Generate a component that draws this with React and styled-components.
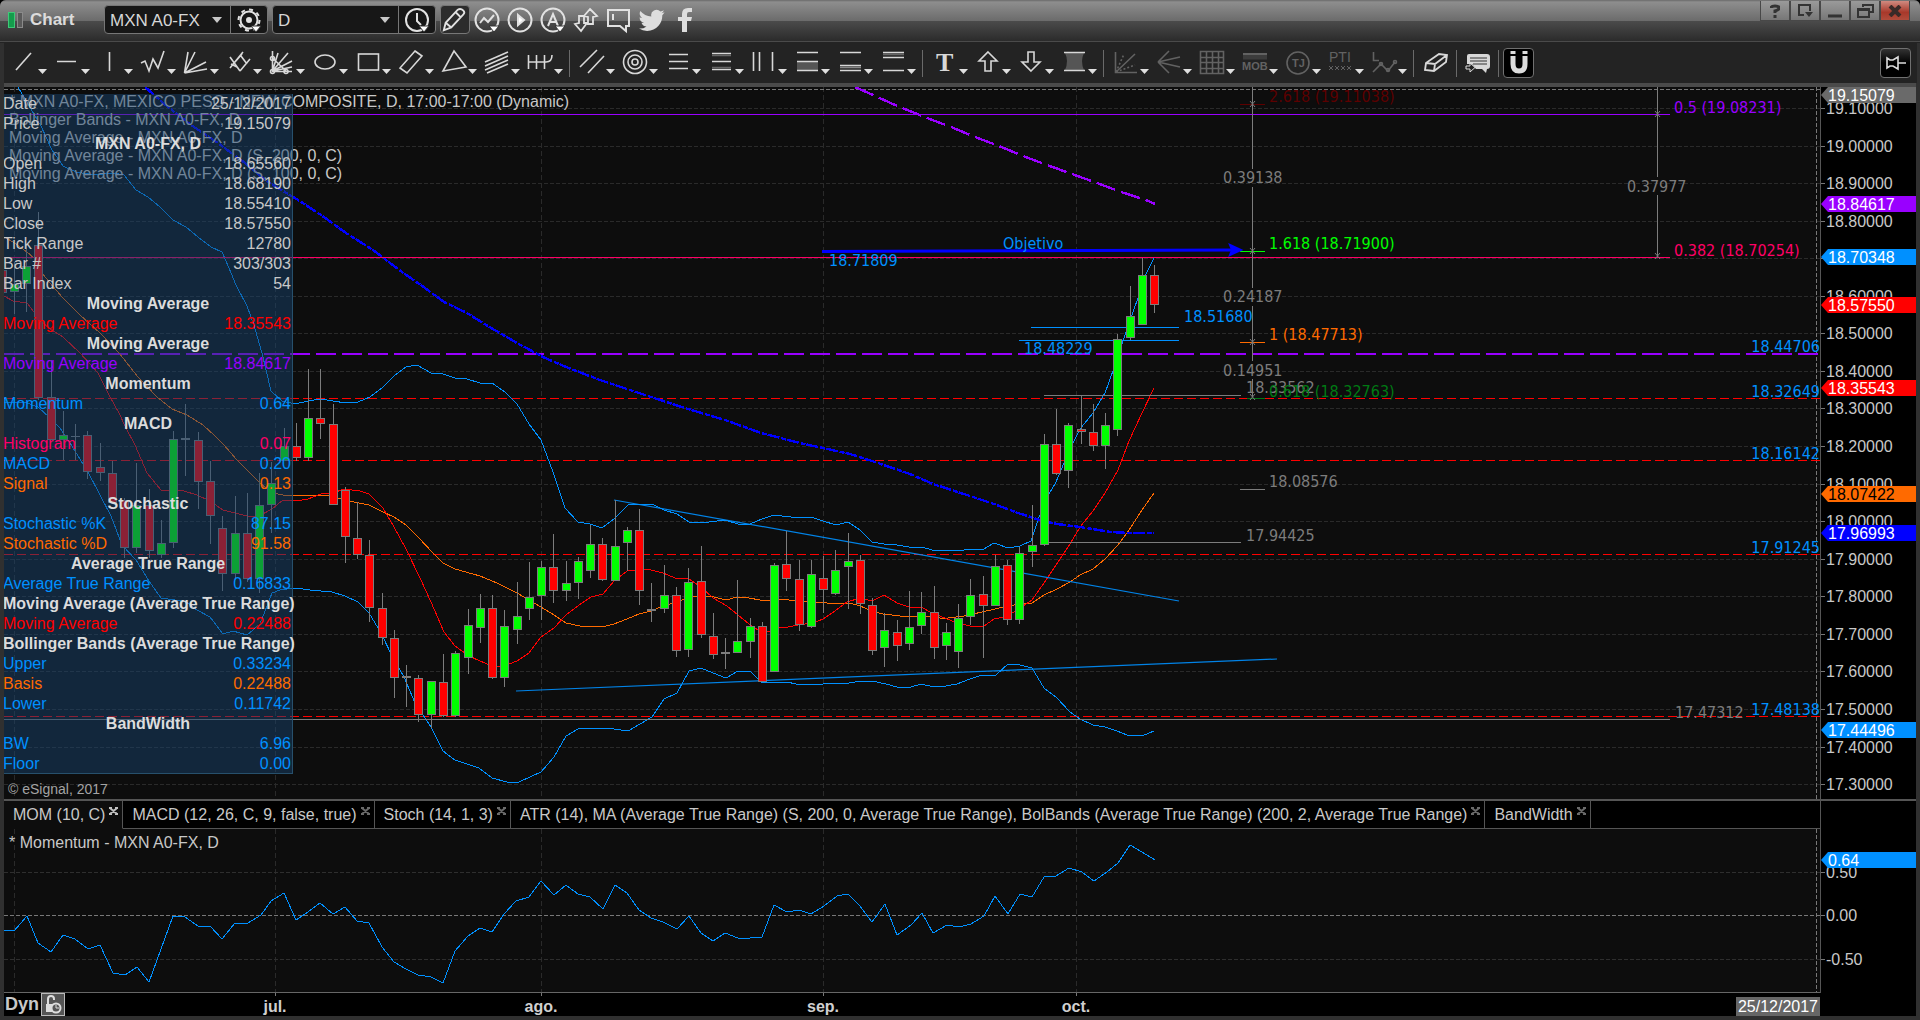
import React from 'react'
import styled, {createGlobalStyle} from 'styled-components'

const GlobalStyle = createGlobalStyle`
  * {
    box-sizing: border-box;
  }
  body {
    margin: 0;
    background: #000;
    font-family: 'Liberation Sans', Arial, sans-serif;
    font-size: 16px;
    color: #c8c8c8;
  }
  button,
  select {
    font: inherit;
    color: inherit;
    padding: 0;
    border: none;
    background: none;
  }
`

/* ---------- window frame ---------- */

const Window = styled.main`
  display: flex;
  flex-direction: column;
  min-height: 100vh;
  background: #303030;
  border-radius: 6px 6px 0 0;
  overflow: hidden;
`

const TitleBar = styled.header`
  display: flex;
  align-items: flex-start;
  height: 43px;
  padding: 0 10px 0 8px;
  background: linear-gradient(#6a6a6a 0, #8e8e8e 2px, #6b6b6b 21px, #4b4b4b 21px, #2b2b2b 41px, #4a4a4a 41px, #4a4a4a 42px, #232323 42px);
`

const TitleGroup = styled.div`
  display: flex;
  align-items: center;
  height: 34px;
  padding-top: 5px;
`

const Title = styled.h1`
  width: 74px;
  margin: 0 0 0 6px;
  font-size: 17px;
  line-height: 24px;
  color: #dcdcdc;
`

const ComboBox = styled.div`
  display: flex;
  align-items: center;
  height: 29px;
  margin-right: 4px;
  background: #171717;
  border: 1px solid #777;
  border-radius: 4px;
`

const SelectWrap = styled.label`
  display: flex;
  align-items: center;
  width: ${props => props.$width};
  height: 100%;
  border-right: 1px solid #777;

  svg {
    margin-left: -18px;
    pointer-events: none;
  }
`

const Select = styled.select`
  width: 100%;
  height: 100%;
  padding: 1px 0 0 5px;
  font-size: 17px;
  color: #d6d6d6;
  appearance: none;
`

const TitleButton = styled.button`
  display: flex;
  align-items: center;
  justify-content: center;
  width: ${props => props.$width || '33px'};
  height: 29px;
  border-radius: 4px;
  ${props => props.$framed && 'background: #2c2c2c; border: 1px solid #777;'}
`

const WindowButtons = styled.div`
  display: flex;
  margin-left: auto;
  padding-top: 1px;
`

const WindowButton = styled.button`
  display: flex;
  align-items: center;
  justify-content: center;
  width: 30px;
  height: 20px;
  background: ${props => (props.$close ? 'linear-gradient(#d08a80, #a8382a 60%, #b04c3c)' : 'linear-gradient(#9a9a9a, #777)')};
  border: 1px solid #484848;
  border-top: none;
`

const ToolBar = styled.div`
  display: flex;
  align-items: center;
  height: 40px;
  margin: 0 3px 0 4px;
  padding: 0 6px 0 2px;
  background: #232323;
`

const Tool = styled.button`
  width: 43px;
  height: 40px;
  color: ${props => (props.$dim ? '#626262' : '#d8d8d8')};

  svg {
    display: block;
  }
`

const SmallTool = styled(Tool)`
  width: ${props => props.$width};
`

const Separator = styled.span`
  width: 1px;
  height: 27px;
  margin: 0 4px;
  background: #6a6a6a;
`

const SquareButton = styled.button`
  display: flex;
  align-items: center;
  justify-content: center;
  width: 31px;
  height: 30px;
  background: ${props => (props.$active ? '#000' : 'linear-gradient(#333, #000 50%)')};
  border: 1px solid #707070;
  border-radius: 4px;
`

const Spacer = styled.span`
  flex: 1;
`

/* ---------- chart area ---------- */

const Body = styled.section`
  flex: 1;
  display: grid;
  grid-template-columns: minmax(0, 1fr) 96px;
  grid-template-rows: minmax(712px, 1fr) 30px 164px 23px;
  margin: 0 4px 4px;
  border-top: 4px solid #4a4a4a;
  background: #000;
`

const Plot = styled.div`
  position: relative;
  background: #0d0d0d;
  overflow: hidden;
  border-bottom: ${props => props.$line || 'none'};
`

const Axis = styled.div`
  border-left: 1px solid #555;
  overflow: hidden;
`

const Drawing = styled.svg`
  display: block;
  width: 100%;
  height: 100%;
  position: ${props => (props.$layer ? 'absolute' : 'static')};
  inset: 0;
`

const Legend = styled.ul`
  position: absolute;
  left: 5px;
  top: ${props => props.$top};
  margin: 0;
  padding: 0;
  list-style: none;
  line-height: 18px;
  white-space: pre;
`

const Copyright = styled.small`
  position: absolute;
  left: 4px;
  bottom: 1px;
  font-size: 14px;
  line-height: 18px;
  color: #a4a4a4;
`

const DataWindow = styled.table`
  position: absolute;
  top: 7px;
  left: -1px;
  width: 290px;
  table-layout: fixed;
  border-collapse: collapse;
  background: rgba(23, 65, 108, 0.5);
  box-shadow: inset -1px -1px #27506c;
  line-height: 20px;
  white-space: nowrap;

  th,
  td {
    height: 20px;
    padding: 0;
  }
  td {
    padding-right: 2px;
    text-align: right;
  }
`

const DataLabel = styled.th`
  font-weight: normal;
  text-align: left;
  color: ${props => props.$color};
`

const DataValue = styled.td`
  color: ${props => props.$color};
`

const DataHeading = styled.th`
  color: #dcdcdc;
  text-align: center;
`

const TabBar = styled.nav`
  display: flex;
  background: #000;
  border-top: 2px solid #555;
`

const Tab = styled.div`
  display: flex;
  align-items: flex-start;
  gap: 4px;
  padding: 0 4px 0 9px;
  background: ${props => (props.$active ? '#0d0d0d' : '#000')};
  border-right: 1px solid #555;
  border-bottom: 1px solid ${props => (props.$active ? '#0d0d0d' : '#555')};
  white-space: nowrap;
`

const TabName = styled.button`
  line-height: 28px;
`

const TabClose = styled.button`
  width: 9px;
  height: 14px;
  color: ${props => (props.$active ? '#c0c0c0' : '#6a6a6a')};
`

const TabFill = styled.span`
  flex: 1;
  border-bottom: 1px solid #555;
`

const AxisGap = styled.div`
  border-left: 1px solid #555;
  border-top: 2px solid #555;
`

const TimeAxis = styled.footer`
  position: relative;
  display: flex;
  align-items: center;
  background: #000;
`

const Mode = styled.strong`
  margin: 0 2px 0 1px;
  font-size: 18px;
`

const LockButton = styled.button`
  width: 24px;
  height: 23px;
  background: #555;
  border: 1px solid #bbb;
`

const CursorDate = styled.time`
  margin: 4px 0 0 auto;
  padding: 0 2px;
  line-height: 19px;
  color: #fff;
  background: #666;
`

/* ---------- data ---------- */

const WHITE = '#c8c8c8'
const BLUE = '#0090ff'
const RED = '#ff0000'
const ORANGE = '#ff6a00'
const PURPLE = '#9900ff'
const PINK = '#ff0066'
const GRAY = '#7c7c7c'

const dataRows = [
  ['Date', '25/12/2017', WHITE],
  ['Price', '19.15079', WHITE],
  ['MXN A0-FX, D'],
  ['Open', '18.65560', WHITE],
  ['High', '18.68190', WHITE],
  ['Low', '18.55410', WHITE],
  ['Close', '18.57550', WHITE],
  ['Tick Range', '12780', WHITE],
  ['Bar #', '303/303', WHITE],
  ['Bar Index', '54', WHITE],
  ['Moving Average'],
  ['Moving Average', '18.35543', RED],
  ['Moving Average'],
  ['Moving Average', '18.84617', PURPLE],
  ['Momentum'],
  ['Momentum', '0.64', BLUE],
  ['MACD'],
  ['Histogram', '0.07', PINK],
  ['MACD', '0.20', BLUE],
  ['Signal', '0.13', ORANGE],
  ['Stochastic'],
  ['Stochastic %K', '87.15', BLUE],
  ['Stochastic %D', '91.58', ORANGE],
  ['Average True Range'],
  ['Average True Range', '0.16833', BLUE],
  ['Moving Average (Average True Range)'],
  ['Moving Average', '0.22488', RED],
  ['Bollinger Bands (Average True Range)'],
  ['Upper', '0.33234', BLUE],
  ['Basis', '0.22488', ORANGE],
  ['Lower', '0.11742', BLUE],
  ['BandWidth'],
  ['BW', '6.96', BLUE],
  ['Floor', '0.00', BLUE]
]

const studies = [
  '* MXN A0-FX, MEXICO PESO - NEW COMPOSITE, D, 17:00-17:00 (Dynamic)',
  'Bollinger Bands - MXN A0-FX, D',
  'Moving Average - MXN A0-FX, D',
  'Moving Average - MXN A0-FX, D (S, 200, 0, C)',
  'Moving Average - MXN A0-FX, D (S, 100, 0, C)'
]

const tabs = [
  'MOM (10, C)',
  'MACD (12, 26, C, 9, false, true)',
  'Stoch (14, 1, 3)',
  'ATR (14), MA (Average True Range) (S, 200, 0, Average True Range), BolBands (Average True Range) (200, 2, Average True Range)',
  'BandWidth'
]

// wick top, body top, body bottom, wick bottom, u(p) / d(own) / n(one)
const candles = [
  [270, 270, 293, 293, 'd'], [262, 284, 292, 314, 'u'], [245, 266, 284, 312, 'u'],
  [212, 245, 398, 400, 'd'], [360, 397, 440, 440, 'd'], [411, 435, 440, 460, 'u'],
  [424, 436, 437, 460, 'n'], [431, 435, 472, 479, 'd'], [443, 467, 473, 481, 'd'],
  [461, 473, 503, 503, 'd'], [498, 500, 548, 558, 'd'], [463, 505, 548, 553, 'u'],
  [489, 505, 551, 558, 'd'], [520, 543, 555, 558, 'u'], [431, 439, 543, 548, 'u'],
  [404, 438, 440, 476, 'n'], [432, 440, 482, 509, 'd'], [461, 481, 516, 544, 'd'],
  [516, 528, 574, 591, 'd'], [496, 533, 574, 580, 'u'], [493, 533, 579, 582, 'd'],
  [473, 505, 579, 593, 'u'], [462, 483, 505, 533, 'u'], [428, 446, 461, 461, 'u'],
  [423, 446, 458, 461, 'd'], [369, 418, 458, 461, 'u'], [369, 418, 424, 439, 'd'],
  [404, 424, 505, 505, 'd'], [487, 490, 537, 563, 'd'], [502, 538, 555, 559, 'd'],
  [540, 555, 608, 622, 'd'], [593, 608, 638, 645, 'd'], [630, 638, 678, 698, 'd'],
  [665, 676, 678, 707, 'n'], [675, 678, 715, 722, 'd'], [681, 681, 715, 728, 'u'],
  [654, 682, 716, 717, 'd'], [651, 653, 716, 717, 'u'], [609, 625, 658, 674, 'u'],
  [594, 608, 628, 643, 'u'], [595, 608, 678, 679, 'd'], [610, 626, 678, 687, 'u'],
  [582, 616, 630, 644, 'u'], [562, 597, 609, 620, 'u'], [561, 567, 596, 620, 'u'],
  [534, 567, 591, 603, 'd'], [561, 583, 591, 601, 'u'], [557, 561, 583, 599, 'u'],
  [525, 544, 571, 578, 'u'], [538, 544, 580, 581, 'd'], [500, 546, 581, 581, 'u'],
  [527, 530, 543, 571, 'u'], [509, 530, 591, 605, 'd'], [583, 609, 611, 622, 'n'],
  [565, 595, 609, 613, 'u'], [587, 595, 651, 657, 'd'], [568, 582, 650, 657, 'u'],
  [546, 581, 635, 638, 'd'], [613, 636, 655, 659, 'd'], [638, 652, 654, 669, 'n'],
  [580, 641, 653, 653, 'u'], [618, 626, 642, 658, 'u'], [622, 626, 682, 682, 'd'],
  [563, 565, 672, 672, 'u'], [531, 564, 579, 591, 'd'], [560, 579, 625, 631, 'd'],
  [560, 574, 627, 628, 'u'], [556, 578, 590, 613, 'd'], [550, 570, 594, 595, 'u'],
  [533, 561, 567, 609, 'u'], [555, 560, 604, 614, 'd'], [598, 605, 651, 655, 'd'],
  [613, 630, 648, 667, 'u'], [620, 632, 646, 661, 'd'], [591, 627, 644, 650, 'u'],
  [592, 612, 626, 634, 'u'], [586, 612, 648, 659, 'd'], [623, 632, 646, 660, 'u'],
  [604, 618, 652, 668, 'u'], [579, 595, 617, 625, 'u'], [576, 594, 606, 658, 'd'],
  [555, 566, 606, 606, 'u'], [560, 565, 620, 625, 'd'], [547, 553, 620, 624, 'u'],
  [505, 545, 552, 567, 'u'], [434, 444, 545, 546, 'u'], [409, 444, 474, 475, 'd'],
  [423, 425, 471, 488, 'u'], [396, 429, 432, 444, 'd'], [404, 432, 446, 451, 'd'],
  [413, 425, 446, 469, 'u'], [334, 339, 430, 436, 'u'], [286, 316, 338, 340, 'u'],
  [258, 275, 325, 325, 'u'], [265, 275, 305, 313, 'd']
]

const upperBand =
  '18,87 28,104 41,126 52,150 63,166 76,172 95,175 113,173 124,175 136,190 148,197 160,207 173,220 186,227 198,237 211,247 222,252 229,268 236,285 247,306 254,325 262,353 271,391 282,401 295,404 308,401 320,399 333,401 346,403 358,402 370,397 382,388 394,376 406,367 417,365 431,373 443,374 455,378 467,379 480,383 492,383 505,392 517,404 529,424 541,440 553,472 565,508 578,522 590,524 602,528 614,519 628,505 640,504 652,504 664,510 677,514 689,522 701,523 725,520 738,524 750,524 762,519 774,515 799,518 811,517 823,521 836,525 848,522 860,530 872,542 884,544 897,545 909,547 922,547 932,550 964,550 984,549 994,543 1008,548 1020,546 1031,541 1039,517 1049,494 1056,482 1064,463 1073,443 1080,429 1093,413 1105,393 1114,368 1122,344 1132,315 1139,295 1146,274 1154,258'
const lowerBand =
  '4,403 24,402 38,407 50,418 60,428 70,443 88,472 100,495 111,516 122,545 136,560 149,581 161,598 175,600 186,602 197,610 210,617 223,634 233,631 247,635 260,624 272,593 280,590 295,588 310,590 332,592 345,596 358,602 369,613 381,633 394,660 404,677 415,703 431,727 443,751 455,760 479,768 492,778 507,782 519,782 541,772 554,757 566,736 578,729 590,728 614,729 628,731 640,724 652,717 664,699 677,693 689,671 701,668 713,673 726,678 738,671 750,671 761,682 787,682 796,684 811,685 835,683 849,683 862,681 872,681 886,684 897,687 911,687 921,684 934,687 946,686 957,684 970,679 982,675 996,675 1008,664 1020,665 1032,668 1044,688 1057,698 1070,712 1080,719 1093,725 1105,727 1117,731 1127,735 1142,736 1154,731'
const redAverage =
  '4,296 13,301 27,303 34,312 40,320 50,329 63,337 80,353 98,373 109,395 119,413 126,428 135,445 147,473 161,490 184,491 197,495 210,501 223,510 247,516 259,516 272,509 283,500 297,501 308,499 321,494 333,493 344,489 360,491 369,494 383,508 394,527 406,549 421,580 431,602 444,632 455,646 469,656 480,661 492,666 501,667 517,661 529,653 541,637 554,628 566,615 579,605 591,597 603,594 614,581 627,571 643,569 651,570 663,573 675,578 689,579 701,587 713,598 727,606 738,615 749,624 761,632 770,631 778,627 788,627 798,625 813,623 823,619 835,611 847,602 860,598 872,601 884,595 897,603 909,607 921,607 932,613 945,618 957,623 970,626 984,626 994,619 1004,617 1014,612 1023,606 1032,600 1044,583 1056,565 1070,544 1080,527 1093,511 1105,493 1118,470 1129,441 1142,413 1154,388'
const orangeAverage =
  '4,237 13,242 27,252 34,258 42,273 50,283 63,298 80,315 100,333 119,353 138,377 157,397 172,409 187,415 203,425 214,435 224,445 237,460 249,472 260,483 272,493 283,495 295,496 320,495 331,496 344,500 369,505 383,512 394,517 406,525 419,538 432,552 443,563 455,569 480,576 497,583 517,593 529,600 541,607 554,615 566,623 580,626 602,627 614,624 627,619 639,614 651,611 663,606 677,602 689,597 710,596 726,600 737,597 749,598 760,600 773,600 783,599 795,601 813,602 827,603 850,603 860,606 872,611 883,614 909,617 921,616 940,618 948,618 964,616 982,612 995,609 1008,606 1020,604 1032,603 1044,595 1057,589 1070,582 1080,575 1093,569 1105,559 1118,545 1129,530 1142,510 1154,493'
const blueAverage =
  '145,87 168,107 191,125 218,143 245,163 268,182 295,198 321,215 346,233 373,250 402,272 425,288 444,302 467,313 486,325 517,343 543,357 566,367 600,380 615,385 651,397 688,409 725,420 761,433 800,443 850,454 872,461 910,474 933,484 970,496 994,504 1018,513 1043,521 1057,524 1080,527 1111,532 1129,533 1154,533'
const purpleAverage =
  '855,87 873,95 895,105 927,118 951,127 975,137 999,146 1023,156 1047,165 1072,174 1097,183 1121,192 1146,200 1155,204'
const momentum =
  '4,930 14,931 27,916 38,943 51,952 63,935 75,939 88,949 100,945 113,973 125,975 137,967 149,982 161,949 173,916 185,917 198,926 210,926 222,939 235,923 248,923 261,915 271,901 284,893 296,920 308,912 320,903 333,914 345,907 357,921 369,923 382,947 394,962 406,969 418,975 431,977 443,983 455,951 468,936 480,928 492,932 504,914 516,901 529,897 541,881 554,895 566,885 578,894 590,897 603,909 615,885 627,893 639,910 651,918 663,922 677,929 689,916 701,933 713,941 725,933 738,938 750,938 762,937 774,905 787,912 799,910 811,914 824,906 837,896 848,894 860,906 872,922 885,904 897,935 911,925 922,913 933,933 947,925 959,927 971,924 984,916 995,896 1008,914 1020,894 1032,897 1044,877 1056,876 1069,868 1082,872 1094,881 1107,872 1118,863 1130,845 1142,852 1155,860'

const months = [[14], [275, 'jul.'], [541, 'ago.'], [823, 'sep.'], [1076, 'oct.']]

const gridPrices = []
for (let i = 0; i < 19; i++) gridPrices.push(19.1 - i / 10)
const priceY = price => Math.round(108 + (19.1 - price) * 375.6)

const priceTags = [
  ['19.15079', 95, '#6a6a6a', '#fff'],
  ['18.84617', 204, PURPLE, '#fff'],
  ['18.70348', 257, BLUE, '#fff'],
  ['18.57550', 305, RED, '#fff'],
  ['18.35543', 388, RED, '#fff'],
  ['18.07422', 494, ORANGE, '#000'],
  ['17.96993', 533, '#0000ff', '#fff'],
  ['17.44496', 730, BLUE, '#fff']
]

const redLevels = [
  ['18.32649', 398, 397],
  ['18.16142', 460, 459],
  ['17.91245', 554, 553],
  ['17.48138', 716, 715]
]

// text, x, baseline, colour
const labels = [
  ['18.71809', 829, 266, BLUE],
  ['Objetivo', 1003, 249, BLUE],
  ['18.51680', 1184, 322, BLUE],
  ['18.48229', 1024, 354, BLUE],
  ['2.618 (19.11038)', 1269, 102, '#5c0000'],
  ['1.618 (18.71900)', 1269, 249, '#00ff00'],
  ['1 (18.47713)', 1269, 340, ORANGE],
  ['18.33562', 1246, 393, GRAY],
  ['0.618 (18.32763)', 1269, 397, '#007a14'],
  ['18.08576', 1269, 487, GRAY],
  ['17.94425', 1246, 541, GRAY],
  ['0.39138', 1223, 183, GRAY],
  ['0.24187', 1223, 302, GRAY],
  ['0.14951', 1223, 376, GRAY],
  ['0.37977', 1627, 192, GRAY],
  ['0.5 (19.08231)', 1674, 113, PURPLE],
  ['0.382 (18.70254)', 1674, 256, PINK],
  ['17.47312', 1675, 718, GRAY]
]

// x1, x2, y, colour
const segments = [
  [4, 1670, 114, PURPLE],
  [4, 1670, 257, PINK],
  [4, 1670, 719, GRAY],
  [1031, 1179, 327, BLUE],
  [1019, 1179, 340, BLUE],
  [1044, 1241, 395, GRAY],
  [1044, 1241, 542, GRAY],
  [1240, 1265, 489, GRAY],
  [1240, 1265, 104, '#5c0000'],
  [1240, 1265, 251, '#00ff00'],
  [1240, 1265, 342, ORANGE],
  [1247, 1265, 398, '#007a14']
]

const fibSpans = [
  [1252, 87, 169], [1252, 187, 288], [1252, 306, 361], [1252, 379, 397],
  [1657, 87, 177], [1657, 195, 257]
]

const fibMarks = [[1252, 104], [1252, 251], [1252, 342], [1252, 397], [1657, 114], [1657, 256]]

/* ---------- icons ---------- */

const tools = [
  {
    items: [
      ['Trend line', <path d="M10 27 25 10" />],
      ['Horizontal line', <path d="M8 18.5H27" />],
      ['Vertical line', <path d="M17.5 9V28" />],
      ['Elliott wave', <path d="M6 20 10 18 14 28 18 16 23 25 29 8" />],
      ['Fan', <path d="M6.500 30 10 9M6.500 30 17 9M6.500 30 28 19M6.500 30 29 26" />],
      ['Pitchfork', <path d="M9 25 22 9M9 14 19 28M19 28 29 16M14 19 21 11M20 13 26 21M10 21 16 24" />],
      ['Gann fan', <><path d="M8.500 8V28.500H28M8.500 28 14 10M8.500 28 24 10M8.500 28 28 18M8.500 28 28 24M8.500 15 22 28" /><circle cx="8.500" cy="15.500" r="2" /><circle cx="8.500" cy="28.500" r="2" /><circle cx="22" cy="28.500" r="2" /></>],
      ['Ellipse', <ellipse cx="18" cy="19" rx="10" ry="7" />],
      ['Rectangle', <rect x="8.500" y="11" width="20" height="16" />],
      ['Parallelogram', <path d="M22 8 29 13 14 30 7 25Z" />],
      ['Triangle', <path d="M18 8 30 24 7 28Z" />],
      ['Regression', <path d="M6 19 29 9M6 23 29 13M6 27 29 17M8 30 29 21" />],
      ['Time cycles', <path d="M6.500 12V26M14.500 12V26M22.500 12V26M6 19H24Q30 19 30 12" />]
    ]
  },
  {
    items: [
      ['Channel', <path d="M6 24 23 7M14 30 30 13" />],
      ['Circles', <><circle cx="18" cy="19" r="11.500" /><circle cx="18" cy="19" r="7" /><circle cx="18" cy="19" r="3" /></>],
      ['Retracement', <path d="M9 11.500H28M9 18.500H28M9 25.500H28" />],
      ['Extension', <><path d="M9 10.500H28M9 18.500H28M9 26.500H28" /><path d="M9 12.500H28M9 24.500H28" stroke="#666" /></>],
      ['Time zones', <path d="M7.500 9V28M13.500 9V28M26.500 9V28" />],
      ['Range', <><path d="M8 19H29V27H8Z" fill="#555" stroke="none" /><path d="M8 9.500H29M8 18.500H29M8 27.500H29" /></>],
      ['Lower range', <><path d="M8 24.500H29" stroke="#888" /><path d="M8 9.500H29M8 22.500H29M8 27.500H29" /></>],
      ['Upper range', <><path d="M8 11.500H29" stroke="#666" /><path d="M8 9.500H29M8 14.500H29M8 27.500H29" /></>]
    ]
  },
  {
    items: [
      ['Text', <text x="9" y="28" fontFamily="Liberation Serif, serif" fontWeight="bold" fontSize="26" fill="currentColor" stroke="none">T</text>],
      ['Arrow up', <path d="M18 9 27 18H21V28H15V18H9Z" />],
      ['Arrow down', <path d="M18 28 27 19H21V9H15V19H9Z" />],
      ['Band', <><path d="M9 10H28Q24 18 28 27H9Q13 18 9 10Z" fill="#555" stroke="none" /><path d="M8 9.500H29M8 27.500H29" /></>]
    ]
  },
  {
    dim: true,
    items: [
      ['Gann angles', <><path d="M7.500 9V29.500H29M8 29 27 11" /><path d="M8 29 16 11M8 29 27 22" strokeDasharray="2 2" /></>],
      ['Speed lines', <path d="M7 19 18 8M7 19 29 14M7 19 29 24M7 19 18 30" />],
      ['Grid', <path d="M6.500 8.500H29.500V30.500H6.500ZM12.500 8V30M18.500 8V30M24.500 8V30M6 14.500H30M6 19.500H30M6 25.500H30" />],
      ['MOB', <><path d="M6 14H30" stroke="#3c3c3c" strokeWidth="5" /><path d="M6 11H30" strokeWidth="2" /><text x="5" y="27" fontSize="11" fontWeight="bold" fill="currentColor" stroke="none">MOB</text></>],
      ['TJ', <><circle cx="18" cy="20" r="11" /><text x="12" y="24" fontSize="11" fontWeight="bold" fill="currentColor" stroke="none">TJ</text></>],
      ['PTI', <><text x="6" y="19" fontSize="14" fill="currentColor" stroke="none">PTI</text><path strokeWidth="1" d="m6 23 4 4m0-4-4 4m6-4 4 4m0-4-4 4m6-4 4 4m0-4-4 4m6-4 4 4m0-4-4 4" /></>],
      ['Swing', <><path d="M7.500 9V17.500H13M7 29 15 21 22 28 29 19" /><circle cx="15" cy="21" r="1.500" /><circle cx="22" cy="27" r="1.500" /><circle cx="29" cy="19" r="1.500" /></>]
    ]
  }
]

const ToolIcon = ({children}) => (
  <svg width="43" height="40" fill="none" stroke="currentColor" strokeWidth="1.600">
    {children}
    <path d="M32 26H41L36.500 31Z" fill="#e0e0e0" stroke="none" />
  </svg>
)

const CaretIcon = () => (
  <svg width="10" height="6">
    <path d="M0 0H10L5 6Z" fill="#c8c8c8" />
  </svg>
)

const TitleIcon = ({children, caret}) => (
  <svg width="30" height="28" viewBox="0 0 30 28" fill="none" stroke="#e2e2e2" strokeWidth="2">
    {children}
    {caret && <path d="M17 20H27L22 26Z" fill="#fff" stroke="#333" strokeWidth="1" />}
  </svg>
)

/* ---------- pieces ---------- */

const SeriesLine = ({points, color, width = 1, dash}) => (
  <polyline
    points={points}
    fill="none"
    stroke={color}
    strokeWidth={width}
    strokeDasharray={dash}
    shapeRendering="crispEdges"
  />
)

const Candle = ({index, bar}) => {
  const [high, top, bottom, low, kind] = bar
  const x = Math.round(13.8 + 12.263 * (index - 1))
  const fill = {u: '#00ff00', d: '#ff0000', n: GRAY}[kind]
  return (
    <g shapeRendering="crispEdges">
      <rect x={x} y={high} width="1" height={low - high} fill={GRAY} />
      <rect x={x - 4} y={top} width="9" height={bottom - top} fill={GRAY} />
      {bottom - top > 2 && (
        <rect x={x - 3} y={top + 1} width="7" height={bottom - top - 2} fill={fill} />
      )}
    </g>
  )
}

const Tag = ({text, y, fill, color}) => (
  <g>
    <path d={`M0 ${y}L7 ${y - 8}H96V${y + 8}H7Z`} fill={fill} />
    <text x="7" y={y + 6} fill={color}>{text}</text>
  </g>
)

const MonthLines = ({height}) =>
  months.map(([x]) => (
    <line key={x} x1={x - 3.5} x2={x - 3.5} y1="0" y2={height} stroke="#2a2a2a" strokeDasharray="5 3" />
  ))

const PriceChart = () => (
  <Drawing $layer>
    <MonthLines height="100%" />
    {gridPrices.map(price => (
      <line
        key={price}
        x2="100%"
        y1={priceY(price) - 86.5}
        y2={priceY(price) - 86.5}
        stroke="#2a2a2a"
        strokeDasharray="4 2"
      />
    ))}
    <line x2="100%" y1="2.500" y2="2.500" stroke="#777" strokeDasharray="4 2" />
    <svg x="100%" overflow="visible">
      <line x1="-3.500" x2="-3.500" y1="0" y2="2000" stroke="#777" strokeDasharray="4 2" />
    </svg>
    <line x2="100%" y1="267" y2="267" stroke={PURPLE} strokeWidth="2" strokeDasharray="20 6" />
    {redLevels.map(([text, y]) => (
      <line key={text} x2="100%" y1={y - 86.5} y2={y - 86.5} stroke={RED} strokeDasharray="9 4" />
    ))}
    <g transform="translate(-4 -87)">
      <SeriesLine points={upperBand} color={BLUE} />
      <SeriesLine points={lowerBand} color={BLUE} />
      <SeriesLine points={orangeAverage} color={ORANGE} />
      <SeriesLine points={redAverage} color={RED} />
      <SeriesLine points={blueAverage} color="#0000ff" width={2.4} dash="12 2 5 1" />
      <SeriesLine points={purpleAverage} color={PURPLE} width={2.4} dash="20 6" />
      {segments.map(([x1, x2, y, color]) => (
        <rect key={`${x1}-${y}`} x={x1} y={y} width={x2 - x1} height="1" fill={color} />
      ))}
      <g stroke={BLUE} strokeWidth="1.200" opacity="0.9">
        <line x1="614" y1="500" x2="1179" y2="601" />
        <line x1="516" y1="691" x2="1277" y2="659" />
      </g>
      <line x1="822" y1="251.500" x2="1236" y2="250" stroke="#0000ff" strokeWidth="3" />
      <path d="M1230 245 1241 250 1230 255 1232 250Z" fill="#0000ff" stroke="#0000ff" strokeWidth="2" />
      {fibSpans.map(([x, y1, y2]) => (
        <rect key={`${x}-${y1}`} x={x} y={y1} width="1" height={y2 - y1} fill={GRAY} />
      ))}
      {fibMarks.map(([x, y]) => (
        <path key={`${x}-${y}`} d={`M${x - 2} ${y - 3}l5 6m0-6l-5 6`} stroke={GRAY} />
      ))}
      {candles.map((bar, i) => (
        <Candle key={i} index={i} bar={bar} />
      ))}
      <g fontFamily="'DejaVu Sans Condensed', 'Noto Sans', sans-serif">
        {labels.map(([text, x, y, color]) => (
          <text key={text} x={x} y={y} fill={color}>{text}</text>
        ))}
      </g>
    </g>
    <g fontFamily="'DejaVu Sans Condensed', 'Noto Sans', sans-serif" textAnchor="end" fill={BLUE}>
      <text x="100%" y="265">18.44706</text>
      {redLevels.map(([text, , y]) => (
        <text key={text} x="100%" y={y - 87}>{text}</text>
      ))}
    </g>
  </Drawing>
)

const MomentumChart = () => (
  <Drawing $layer>
    <MonthLines height="100%" />
    {[43.5, 130.5].map(y => (
      <line key={y} x2="100%" y1={y} y2={y} stroke="#2e2e2e" strokeDasharray="4 2" />
    ))}
    <line x2="100%" y1="86.500" y2="86.500" stroke="#777" strokeDasharray="4 2" />
    <svg x="100%" overflow="visible">
      <line x1="-3.500" x2="-3.500" y1="0" y2="400" stroke="#777" strokeDasharray="4 2" />
    </svg>
    <g transform="translate(-4 -829)">
      <SeriesLine points={momentum} color={BLUE} />
    </g>
  </Drawing>
)

const DataPanel = () => (
  <DataWindow>
    <tbody>
      {dataRows.map(([name, value, color], i) => (
        <tr key={i}>
          {value ? (
            <>
              <DataLabel scope="row" $color={color}>{name}</DataLabel>
              <DataValue $color={color}>{value}</DataValue>
            </>
          ) : (
            <DataHeading colSpan={2}>{name}</DataHeading>
          )}
        </tr>
      ))}
    </tbody>
  </DataWindow>
)

const TitleRow = () => (
  <TitleBar>
    <TitleGroup>
      <svg width="16" height="18">
        <rect x="0.500" y="1.500" width="6" height="15" fill="#149c4c" stroke="#3fc878" />
        <rect x="9.500" y="1.500" width="5" height="15" fill="#5a5a5a" stroke="#8a8a8a" />
      </svg>
      <Title>Chart</Title>
      <ComboBox>
        <SelectWrap $width="126px">
          <Select aria-label="Symbol" defaultValue="MXN A0-FX">
            <option>MXN A0-FX</option>
          </Select>
          <CaretIcon />
        </SelectWrap>
        <TitleButton aria-label="Settings" $width="36px">
          <TitleIcon caret>
            <circle cx="15" cy="14" r="8.500" />
            <circle cx="15" cy="14" r="10.500" strokeDasharray="4 4.200" />
            <circle cx="15" cy="14" r="2" fill="#e2e2e2" />
          </TitleIcon>
        </TitleButton>
      </ComboBox>
      <ComboBox>
        <SelectWrap $width="126px">
          <Select aria-label="Interval" defaultValue="D">
            <option>D</option>
          </Select>
          <CaretIcon />
        </SelectWrap>
        <TitleButton aria-label="Time template" $width="36px">
          <TitleIcon caret>
            <circle cx="15" cy="14" r="11" />
            <path d="M15 7V15L19 19" />
          </TitleIcon>
        </TitleButton>
      </ComboBox>
      <TitleButton aria-label="Draw" $framed $width="30px">
        <TitleIcon>
          <path d="M3 25 5 17 18 3Q21 1 24 4Q26 6 24 8L11 22ZM16 6 21 11M5 17 11 22" />
        </TitleIcon>
      </TitleButton>
      <TitleButton aria-label="Studies">
        <TitleIcon caret>
          <circle cx="15" cy="14" r="11.500" />
          <path d="M8 17 12 12 16 16 22 9" />
        </TitleIcon>
      </TitleButton>
      <TitleButton aria-label="Play">
        <TitleIcon>
          <circle cx="15" cy="14" r="11.500" />
          <path d="M13 9 19 14 13 19Z" fill="#fff" />
        </TitleIcon>
      </TitleButton>
      <TitleButton aria-label="Alerts">
        <TitleIcon caret>
          <circle cx="15" cy="14" r="11.500" />
          <path d="M10 20 15 8 20 20M12 16H18" />
        </TitleIcon>
      </TitleButton>
      <TitleButton aria-label="Trade">
        <TitleIcon>
          <path d="M19 3 26 10 22 11V18H17V11L13 10ZM10 25 4 18 8 17V10H13V17H16Z" strokeWidth="1.800" />
        </TitleIcon>
      </TitleButton>
      <TitleButton aria-label="Comments">
        <TitleIcon>
          <path d="M4 4H25V20H22V25L16 20H4ZM9 8V14" />
        </TitleIcon>
      </TitleButton>
      <TitleButton aria-label="Twitter">
        <svg width="26" height="26" viewBox="0 0 24 24" fill="#dedede">
          <path d="M23.600 4.900a9.700 9.700 0 0 1-2.800.8 4.900 4.900 0 0 0 2.100-2.700 9.800 9.800 0 0 1-3.100 1.200 4.900 4.900 0 0 0-8.400 4.500A13.900 13.900 0 0 1 1.300 3.600a4.900 4.900 0 0 0 1.500 6.500 4.900 4.900 0 0 1-2.200-.6 4.900 4.900 0 0 0 3.900 4.900 4.900 4.900 0 0 1-2.200.1 4.900 4.900 0 0 0 4.600 3.400A9.900 9.900 0 0 1 0 19.900a13.900 13.900 0 0 0 7.500 2.200c9.100 0 14.300-7.700 14-14.600a10 10 0 0 0 2.100-2.600z" />
        </svg>
      </TitleButton>
      <TitleButton aria-label="Facebook">
        <svg width="14" height="24" viewBox="0 0 14 24" fill="#dedede">
          <path d="M4 24V13H0V9H4V6Q4 0 10 0H14V4H11Q9 4 9 6V9H14L13 13H9V24Z" />
        </svg>
      </TitleButton>
    </TitleGroup>
    <WindowButtons>
      <WindowButton aria-label="Help">
        <svg width="10" height="14" fill="none" stroke="#333" strokeWidth="3">
          <path d="M1 4Q1 2 5 2Q9 2 9 4Q9 6 5 7V9M5 11V14" />
        </svg>
      </WindowButton>
      <WindowButton aria-label="Window menu">
        <svg width="16" height="14" fill="none" stroke="#333" strokeWidth="2">
          <path d="M7 11H2V1H13V7" />
          <path d="M8 8H16L12 13Z" fill="#333" stroke="none" />
        </svg>
      </WindowButton>
      <WindowButton aria-label="Minimize">
        <svg width="14" height="14" stroke="#333" strokeWidth="3">
          <path d="M0 12H14" />
        </svg>
      </WindowButton>
      <WindowButton aria-label="Restore">
        <svg width="17" height="15" fill="none" stroke="#333" strokeWidth="2">
          <path d="M6 4V2H16V9H13M1 6H12V14H1ZM1 7H12" />
        </svg>
      </WindowButton>
      <WindowButton aria-label="Close" $close>
        <svg width="14" height="12" stroke="#3a2a28" strokeWidth="4">
          <path d="M2 1 12 11M12 1 2 11" />
        </svg>
      </WindowButton>
    </WindowButtons>
  </TitleBar>
)

const DrawingTools = () => (
  <ToolBar>
    {tools.map((group, g) => (
      <React.Fragment key={g}>
        {group.items.map(([name, shape]) => (
          <Tool key={name} aria-label={name} $dim={group.dim}>
            <ToolIcon>{shape}</ToolIcon>
          </Tool>
        ))}
        <Separator />
      </React.Fragment>
    ))}
    <SmallTool aria-label="Eraser" $width="34px">
      <svg width="34" height="40" fill="none" stroke="currentColor" strokeWidth="1.800">
        <path d="M7 27 8 20 21 11 29 12 28 19 16 28ZM8 20 17 21 29 12M17 21 16 28" />
      </svg>
    </SmallTool>
    <Separator />
    <SmallTool aria-label="Notes" $width="33px">
      <svg width="33" height="40" fill="currentColor">
        <path d="M8 11H26Q29 11 29 14V23Q29 26 26 26L25 30 21 26H15L11 21H6V13Q6 11 8 11Z" />
        <path d="M9 15H26M9 18H26M12 21H26" stroke="#333" />
        <path d="M5 23H9V20L14 24.500 9 29V26H5Z" stroke="#ddd" fill="#222" />
      </svg>
    </SmallTool>
    <Separator />
    <SquareButton aria-label="Snap" $active>
      <svg width="20" height="24" fill="none" stroke="#dcdcdc" strokeWidth="5">
        <path d="M4 5V13Q4 20 10 20Q16 20 16 13V5" />
        <path d="M4 0V3M16 0V3" />
      </svg>
    </SquareButton>
    <Spacer />
    <SquareButton aria-label="Pin toolbar">
      <svg width="22" height="16" fill="none" stroke="#dcdcdc" strokeWidth="1.600">
        <path d="M2 3 5 5H8L13 2V14L8 11H5L2 13ZM13 8H21" />
      </svg>
    </SquareButton>
  </ToolBar>
)

const MonthLabels = () => (
  <Drawing $layer>
    {months.map(([x, name]) => (
      <g key={x}>
        {name && <line x1={x - 3.5} x2={x - 3.5} y1="0" y2="3" stroke="#777" />}
        <text x={x - 4} y="19" textAnchor="middle" fontWeight="bold" fill="#d0d0d0">{name}</text>
      </g>
    ))}
  </Drawing>
)

const App = () => (
  <>
    <GlobalStyle />
    <Window>
      <TitleRow />
      <DrawingTools />
      <Body>
        <Plot>
          <PriceChart />
          <Legend $top="6px">
            {studies.map(name => (
              <li key={name}>{name}</li>
            ))}
          </Legend>
          <DataPanel />
          <Copyright>© eSignal, 2017</Copyright>
        </Plot>
        <Axis>
          <Drawing>
            {gridPrices.map(price => (
              <g key={price}>
                <line x2="4" y1={priceY(price) - 86.5} y2={priceY(price) - 86.5} stroke="#777" />
                <text x="5" y={priceY(price) - 81} fill="#c8c8c8">{price.toFixed(5)}</text>
              </g>
            ))}
            {priceTags.map(([text, y, fill, color]) => (
              <Tag key={text} text={text} y={y - 87} fill={fill} color={color} />
            ))}
          </Drawing>
        </Axis>
        <TabBar>
          {tabs.map((name, i) => (
            <Tab key={name} $active={i === 0}>
              <TabName>{name}</TabName>
              <TabClose aria-label={`Close ${name}`} $active={i === 0}>
                <svg width="9" height="8" stroke="currentColor" strokeWidth="2">
                  <path d="M1 1 8 7M8 1 1 7M0 1H3M6 1H9M0 7H3M6 7H9" />
                </svg>
              </TabClose>
            </Tab>
          ))}
          <TabFill />
        </TabBar>
        <AxisGap />
        <Plot $line="1px solid #666">
          <MomentumChart />
          <Legend $top="5px">
            <li>* Momentum - MXN A0-FX, D</li>
          </Legend>
        </Plot>
        <Axis>
          <Drawing>
            {[['0.50', 43], ['0.00', 86], ['-0.50', 130]].map(([text, y]) => (
              <g key={text}>
                <line x2="4" y1={y + 0.5} y2={y + 0.5} stroke="#777" />
                <text x="5" y={y + 6} fill="#c8c8c8">{text}</text>
              </g>
            ))}
            <Tag text="0.64" y={31} fill={BLUE} color="#fff" />
          </Drawing>
        </Axis>
        <TimeAxis>
          <MonthLabels />
          <Mode>Dyn</Mode>
          <LockButton aria-label="Lock time axis">
            <svg width="22" height="20" fill="none" stroke="#ddd" strokeWidth="2">
              <path d="M6 10V5Q6 2 9 2Q12 2 12 5V6" />
              <path d="M4 10H13V18H4Z" fill="#ddd" stroke="none" />
              <circle cx="14" cy="14" r="4.500" fill="#555" />
              <path d="M14 11V14H17" strokeWidth="1" />
            </svg>
          </LockButton>
          <CursorDate>25/12/2017</CursorDate>
        </TimeAxis>
      </Body>
    </Window>
  </>
)

export default App
